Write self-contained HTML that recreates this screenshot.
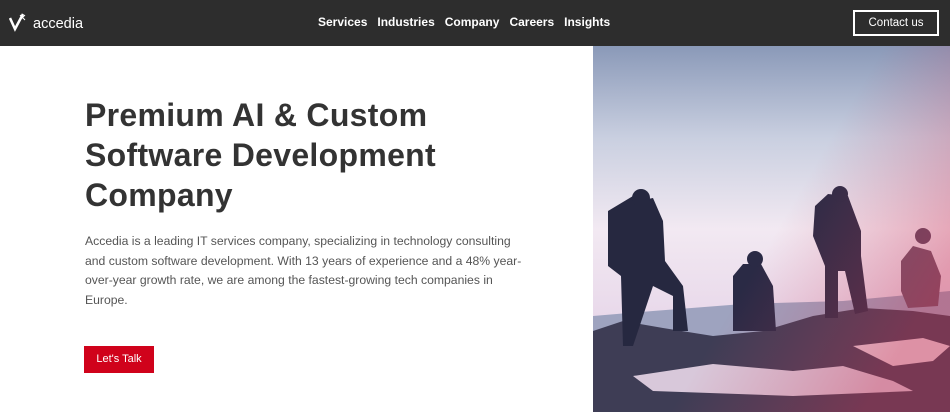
<!DOCTYPE html>
<html><head><meta charset="utf-8"><style>
*{margin:0;padding:0;box-sizing:border-box}
body{width:950px;height:415px;overflow:hidden;background:#fff;font-family:"Liberation Sans",sans-serif;position:relative}
.nav{position:absolute;left:0;top:0;width:950px;height:46px;background:#2d2d2d}
.logo{position:absolute;left:9px;top:12px;color:#fff;font-size:14.5px}
.links{position:absolute;left:318px;top:15px;color:#fff;font-size:12px;font-weight:bold}
.links span{margin-right:10px}
.contact{position:absolute;left:853px;top:10px;width:86px;height:26px;border:2px solid #fff;color:#fff;font-size:11.5px;text-align:center;line-height:22px}
h1{position:absolute;left:85px;top:95px;font-size:32px;line-height:40px;color:#333;font-weight:bold;width:440px;letter-spacing:0.3px}
p{position:absolute;left:85px;top:232px;width:440px;font-size:12.2px;line-height:19.6px;color:#555}
.btn{position:absolute;left:84px;top:346px;width:70px;height:27px;background:#d0021b;color:#fff;font-size:11px;text-align:center;line-height:27px}
svg.hero{position:absolute;left:593px;top:46px}
</style></head><body>
<div class="nav">
<div class="logo"><svg width="20" height="20" viewBox="0 0 20 20" style="vertical-align:-4px"><path d="M1 6 L6 17 L14 2" stroke="#fff" stroke-width="2.5" fill="none"/><path d="M11 3 L16 8 M16 3 L11 8" stroke="#fff" stroke-width="1"/></svg> accedia</div>
<div class="links"><span>Services</span><span>Industries</span><span>Company</span><span>Careers</span><span>Insights</span></div>
<div class="contact">Contact us</div>
</div>
<h1>Premium AI &amp; Custom Software Development Company</h1>
<p>Accedia is a leading IT services company, specializing in technology consulting<br>and custom software development. With 13 years of experience and a 48% year-<br>over-year growth rate, we are among the fastest-growing tech companies in<br>Europe.</p>
<div class="btn">Let's Talk</div>
<svg class="hero" width="357" height="366" viewBox="0 0 357 366">
<defs>
<linearGradient id="sky" x1="0" y1="0" x2="0" y2="1"><stop offset="0" stop-color="#8a99b8"/><stop offset="0.25" stop-color="#c9cfe0"/><stop offset="0.5" stop-color="#f2e9f2"/><stop offset="0.75" stop-color="#e8d8ea"/><stop offset="1" stop-color="#d3c3d8"/></linearGradient>
<linearGradient id="tint" x1="0" y1="0" x2="1" y2="0.6"><stop offset="0.6" stop-color="#d04060" stop-opacity="0"/><stop offset="1" stop-color="#d03050" stop-opacity="0.4"/></linearGradient>
</defs>
<rect width="357" height="366" fill="url(#sky)"/>
<path d="M0 270 L60 265 L150 258 L250 255 L357 245 L357 290 L0 300Z" fill="#9ea3bf"/>
<path d="M0 285 L30 275 L70 282 L120 290 L170 285 L220 270 L270 262 L320 265 L357 270 L357 366 L0 366Z" fill="#3e3d55"/>
<path d="M40 330 L120 318 L200 325 L250 320 L300 335 L320 345 L200 350 L60 345Z" fill="#d8c8da"/>
<path d="M260 300 L330 292 L357 300 L340 315 L300 320Z" fill="#e6d2de"/>
<path d="M15 165 L40 150 L45 155 L60 152 L70 175 L72 215 L90 240 L95 285 L80 285 L80 250 L60 240 L40 300 L30 300 L28 230 L15 220Z" fill="#262840"/>
<circle cx="48" cy="152" r="9" fill="#262840"/>
<path d="M140 230 L150 218 L168 218 L180 240 L183 285 L140 285Z" fill="#2a2a45"/>
<circle cx="162" cy="213" r="8" fill="#2a2a45"/>
<path d="M222 160 L235 148 L255 150 L268 185 L268 210 L275 265 L262 268 L252 225 L245 225 L245 272 L232 272 L232 220 L220 190Z" fill="#2a2b45"/>
<circle cx="247" cy="148" r="8" fill="#2a2b45"/>
<path d="M308 215 L320 200 L338 205 L348 230 L345 260 L315 262 L308 245Z" fill="#6a5068"/>
<circle cx="330" cy="190" r="8" fill="#5a4560"/>
<rect width="357" height="366" fill="url(#tint)"/>
</svg>
</body></html>
